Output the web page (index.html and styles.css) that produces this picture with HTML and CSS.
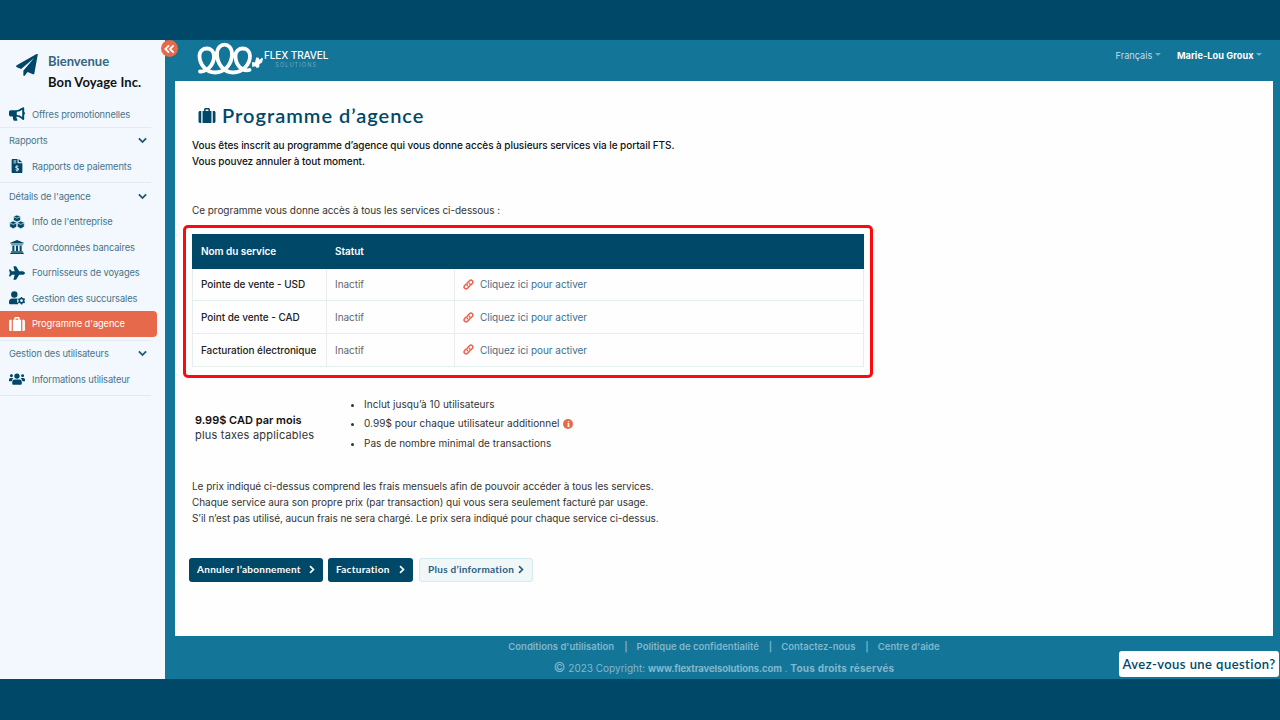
FILE: index.html
```
<!DOCTYPE html>
<html lang="fr">
<head>
<meta charset="UTF-8">
<meta name="viewport" content="width=device-width, initial-scale=1.0">
<title>Programme d’agence</title>
<link rel="stylesheet" href="styles.css">
</head>
<body>

<!-- Icons used in the page -->
<svg class="sprite" xmlns="http://www.w3.org/2000/svg">
  <symbol id="plane-paper" viewBox="0 0 24 24"><path d="M23.8.4 20 21.2c-.1.9-.8 1.1-1.5.8l-5.900-2.500-2.900 4c-.6.8-1.700.5-1.700-.6v-4.700L19.500 4.600 5.600 16.300.9 14.400c-1-.4-1-1.500-.1-2L22.400.1c.8-.4 1.500-.2 1.400.3z"/></symbol>
  <symbol id="horn" viewBox="0 0 24 20"><path fill-rule="evenodd" d="M21.500 0c.8 0 1.300.6 1.300 1.400V7c1.600.8 1.600 3.200 0 4v6.600c0 1.200-1.300 1.700-2.200 1l-3.300-2.600c-1.700-1.300-3.800-2.100-6-2.200-.2 1.900.2 3.300 1.200 4.600.5.700 0 1.600-.9 1.600H7.800c-.5 0-.9-.3-1.100-.7-.8-1.700-1.100-3.500-.8-5.500H2.500A2.500 2.500 0 0 1 0 11.300V6.700a2.500 2.500 0 0 1 2.500-2.500h8c2.500 0 4.900-.8 6.800-2.300L20.600.3c.3-.2.600-.3.900-.3zM19.800 3.600a12 12 0 0 1-8.100 2.900v5a12 12 0 0 1 8.100 2.900z"/></symbol>
  <symbol id="invoice" viewBox="0 0 20 26"><path fill-rule="evenodd" d="M2 0h9v6.500c0 .8.500 1.300 1.300 1.300H20V24c0 1.200-.8 2-2 2H2c-1.200 0-2-.8-2-2V2C0 .8.800 0 2 0zm1.500 3v1.500h5V3zm0 3.500V8h5V6.500zM9.300 11v1.400c-3.200.6-3.300 4.300-.3 5.200 2.500.8 2.400 1.200 2.300 1.600-.3.900-2 .7-3.400-.3l-1 1.700c.7.500 1.500.8 2.400 1V23h1.500v-1.400c3.500-.5 3.800-4.500.5-5.500-2.600-.8-2.600-1-2.400-1.500.3-.7 1.800-.6 3 .1l.9-1.600a5 5 0 0 0-2-.7V11zM13 0l7 6h-7z"/></symbol>
  <symbol id="cubes" viewBox="0 0 28 26"><g fill="currentColor" stroke="#f2f8fd" stroke-width="1.200"><path d="M14 0l6.500 2.800v7L14 13 7.500 9.800v-7zM7 11l6.500 3v8L7 25.500.5 22v-8zM21 11l6.500 3v8L21 25.500 14.500 22v-8z"/><path fill="none" d="M8 3.500l6 2.500 6-2.500M1 15L7 17.500l6-2.500M15 15l6 2.500 6-2.500"/></g></symbol>
  <symbol id="bank" viewBox="0 0 24 24"><path d="M12 0l11.500 4.500V6H.5V4.500zM2 7.500h20V9H2zM4 10h3.500v9H4zm6.200 0h3.600v9h-3.600zm6.300 0H20v9h-3.500zM2 19.300h20v2.200H2zM.5 22h23v2H.5z"/></symbol>
  <symbol id="plane" viewBox="0 0 28 24"><path d="M23.500 8.800c2 0 4.500 1.500 4.500 3.200s-2.500 3.200-4.500 3.200h-5.700l-5.200 8.300c-.2.300-.5.500-.8.500H8.600c-.6 0-1-.5-.8-1l2.200-7.800H5l-2.300 2.600c-.2.200-.4.300-.7.300H.8c-.5 0-.9-.5-.7-1L1.600 12 .1 6.900c-.2-.5.200-1 .7-1H2c.3 0 .5.100.7.300L5 8.800h5L7.800 1c-.2-.5.200-1 .8-1h3.200c.3 0 .6.200.8.500l5.200 8.300z"/></symbol>
  <symbol id="user-cog" viewBox="0 0 30 26"><circle cx="10" cy="6.500" r="6"/><path d="M6 14h8c.8 0 1.600.2 2.300.5-1.600 2.500-1.500 7 1.500 9.500-.4.300-.7.500-1.200.5H2.300A2.300 2.300 0 0 1 0 22.200v-2.200c0-3.500 2.500-6 6-6z"/><circle cx="23.500" cy="18" r="4" fill="none" stroke="currentColor" stroke-width="3"/><path fill="none" stroke="currentColor" stroke-width="2.600" d="M23.500 11v2.500M23.500 22.500V25M17.400 14.500l2.200 1.200M27.400 20.300l2.200 1.200M17.400 21.500l2.200-1.200M27.400 15.700l2.200-1.200"/></symbol>
  <symbol id="suitcase" viewBox="0 0 26 23"><path fill-rule="evenodd" d="M6.200 23V4.500h2.300V2.200C8.500 1 9.500 0 10.700 0h4.600c1.200 0 2.200 1 2.200 2.200v2.300h2.300V23zM10.800 4.500h4.400V2.300h-4.400zM4.200 4.500V23H2.200C1 23 0 22 0 20.800V6.700c0-1.200 1-2.200 2.200-2.200zM21.800 4.500h2c1.200 0 2.200 1 2.200 2.200v14.100c0 1.200-1 2.200-2.200 2.200h-2z"/></symbol>
  <symbol id="users" viewBox="0 0 30 22"><circle cx="15" cy="5.500" r="5"/><circle cx="4.500" cy="5" r="2.800"/><circle cx="25.500" cy="5" r="2.800"/><path d="M10.500 12h9a4.500 4.500 0 0 1 4.500 4.500V20a2 2 0 0 1-2 2H8a2 2 0 0 1-2-2v-3.500a4.500 4.500 0 0 1 4.500-4.500zM3 9h3c1 0 1.800.4 2.400 1.200A6 6 0 0 0 5 15H0v-3a3 3 0 0 1 3-3zM24 9h3a3 3 0 0 1 3 3v3h-5a6 6 0 0 0-3.400-4.800C22.200 9.400 23 9 24 9z"/></symbol>
  <symbol id="link" viewBox="0 0 24 24"><g fill="none" stroke="currentColor" stroke-width="3.200" stroke-linecap="round"><path d="M10 14.500c-2-2-2-4.600-.2-6.400l4.400-4.400c4-4 10.100 2 6.100 6.100l-2.600 2.600"/><path d="M14 9.500c2 2 2 4.600.2 6.400l-4.400 4.400c-4 4-10.100-2-6.100-6.100l2.600-2.600"/></g></symbol>
  <symbol id="down" viewBox="0 0 10 7"><path fill="none" stroke="currentColor" stroke-width="2" d="M1 1.200l4 4 4-4"/></symbol>
  <symbol id="right" viewBox="0 0 7 10"><path fill="none" stroke="currentColor" stroke-width="2" d="M1.200 1l4 4-4 4"/></symbol>
</svg>

<div class="app">
  <aside class="sidebar">
    <div class="welcome">
      <svg class="welcome-icon"><use href="#plane-paper"/></svg>
      <div>
        <div class="hello">Bienvenue</div>
        <div class="agency">Bon Voyage Inc.</div>
      </div>
    </div>
    <nav>
      <div class="group group-promo">
        <a class="item"><svg><use href="#horn"/></svg>Offres promotionnelles</a>
      </div>
      <div class="group">
        <div class="group-title">Rapports <svg><use href="#down"/></svg></div>
        <a class="item"><svg><use href="#invoice"/></svg>Rapports de paiements</a>
      </div>
      <div class="group">
        <div class="group-title">Détails de l'agence <svg><use href="#down"/></svg></div>
        <a class="item"><svg><use href="#cubes"/></svg>Info de l'entreprise</a>
        <a class="item"><svg><use href="#bank"/></svg>Coordonnées bancaires</a>
        <a class="item"><svg><use href="#plane"/></svg>Fournisseurs de voyages</a>
        <a class="item"><svg><use href="#user-cog"/></svg>Gestion des succursales</a>
        <a class="item active"><svg><use href="#suitcase"/></svg>Programme d'agence</a>
      </div>
      <div class="group">
        <div class="group-title">Gestion des utilisateurs <svg><use href="#down"/></svg></div>
        <a class="item"><svg><use href="#users"/></svg>Informations utilisateur</a>
      </div>
    </nav>
    <button class="collapse" aria-label="Réduire">
      <svg viewBox="0 0 12 10"><path d="M5.500 1l-4 4 4 4M10.500 1l-4 4 4 4"/></svg>
    </button>
  </aside>

  <div class="main">
    <header class="topbar">
      <div class="logo">
        <svg class="logo-mark" viewBox="0 0 66 34">
          <path class="loop" d="M3 29.500C10 30 17 23 17 14C17 4 2.500 4 2.500 14C2.500 22 9 30.500 18 30.500C28 30.500 35 22 35 12C35-.5 20-.5 20 12C20 22 27 30.500 36 30.500C46 30.500 53 22 53 14C53 4 38.500 4 38.500 14C38.500 22 44 30 52.500 28"/>
          <path class="craft" d="M55 20l3 .5 1.200-5 2.400.2.800 2 2.800-2 .8 1.200-1 3.600-2.600 1.800-.2 2.900-2.400.8-1.500-1.700-3 .7z"/>
        </svg>
        <div class="logo-text">
          <div class="logo-name">FLEX TRAVEL</div>
          <div class="logo-sub">SOLUTIONS</div>
        </div>
      </div>
      <div class="top-links">
        <a class="lang">Français <i class="caret"></i></a>
        <a class="user">Marie-Lou Groux <i class="caret"></i></a>
      </div>
    </header>

    <main class="content">
      <h1><svg><use href="#suitcase"/></svg>Programme d’agence</h1>
      <p class="intro">Vous êtes inscrit au programme d’agence qui vous donne accès à plusieurs services via le portail FTS.<br>Vous pouvez annuler à tout moment.</p>
      <p class="lead">Ce programme vous donne accès à tous les services ci-dessous :</p>

      <div class="highlight">
        <table>
          <thead>
            <tr><th class="col-name">Nom du service</th><th class="col-status">Statut</th><th></th></tr>
          </thead>
          <tbody>
            <tr><td class="service">Pointe de vente - USD</td><td>Inactif</td><td><a class="activate"><svg><use href="#link"/></svg>Cliquez ici pour activer</a></td></tr>
            <tr><td class="service">Point de vente - CAD</td><td>Inactif</td><td><a class="activate"><svg><use href="#link"/></svg>Cliquez ici pour activer</a></td></tr>
            <tr><td class="service">Facturation électronique</td><td>Inactif</td><td><a class="activate"><svg><use href="#link"/></svg>Cliquez ici pour activer</a></td></tr>
          </tbody>
        </table>
      </div>

      <div class="pricing">
        <div class="price"><strong>9.99$ CAD par mois</strong><br>plus taxes applicables</div>
        <ul>
          <li>Inclut jusqu’à 10 utilisateurs</li>
          <li>0.99$ pour chaque utilisateur additionnel <span class="info">i</span></li>
          <li>Pas de nombre minimal de transactions</li>
        </ul>
      </div>

      <p class="note">Le prix indiqué ci-dessus comprend les frais mensuels afin de pouvoir accéder à tous les services.<br>Chaque service aura son propre prix (par transaction) qui vous sera seulement facturé par usage.<br>S’il n’est pas utilisé, aucun frais ne sera chargé. Le prix sera indiqué pour chaque service ci-dessus.</p>

      <div class="actions">
        <button class="btn btn-cancel">Annuler l’abonnement <svg><use href="#right"/></svg></button>
        <button class="btn btn-billing">Facturation <svg><use href="#right"/></svg></button>
        <button class="btn btn-light">Plus d’information <svg><use href="#right"/></svg></button>
      </div>
    </main>

    <footer>
      <div class="footer-links"><a>Conditions d'utilisation</a><a>Politique de confidentialité</a><a>Contactez-nous</a><a>Centre d'aide</a></div>
      <div class="copyright"><span class="copy">©</span> 2023 Copyright: <b class="site">www.flextravelsolutions.com</b> . <b class="rights">Tous droits réservés</b></div>
    </footer>
  </div>

  <div class="question">Avez-vous une question?</div>
</div>

</body>
</html>
```
FILE: styles.css
```
* {
  box-sizing: border-box;
}

body {
  margin: 0;
  padding: 40px 0 41px;
  height: 720px;
  overflow: hidden;
  background-color: #004868;
  font-family: Inter, "Open Sans", sans-serif;
  font-size: 10px;
  color: #333;
}

svg {
  fill: currentColor;
  flex: none;
}

.sprite {
  display: none;
}

.app {
  position: relative;
  display: flex;
  height: 639px;
  background-color: #137598;
}

/* Sidebar */
.sidebar {
  position: relative;
  width: 165px;
  flex: none;
  background-color: #f2f8fd;
  color: #48738a;
}

.welcome {
  display: flex;
  height: 61px;
  padding: 11px 0 0 16px;
  gap: 10px;
  font-family: Lato, sans-serif;
  font-size: 13px;
  font-weight: 700;
  line-height: 21px;
}

.welcome-icon {
  width: 22px;
  height: 22px;
  margin-top: 3px;
  color: #004868;
}

.hello {
  color: #356683;
}

.agency {
  color: #111;
  letter-spacing: 0.1px;
  white-space: nowrap;
}

.group {
  width: 151px;
  padding-bottom: 3px;
  border-bottom: 1px solid #e4eaed;
}

.group-promo {
  padding: 0.5px 0 0;
}

.group-title {
  display: flex;
  justify-content: space-between;
  align-items: center;
  height: 26px;
  padding: 0 4px 0 9px;
  font-size: 9.3px;
  letter-spacing: -0.12px;
}

.group-title svg {
  width: 9px;
  height: 7px;
  color: #175672;
}

.item {
  display: flex;
  align-items: center;
  gap: 7px;
  width: 157px;
  height: 25.5px;
  padding-left: 9px;
  font-size: 9.3px;
  letter-spacing: -0.1px;
  white-space: nowrap;
}

.group-promo .item {
  height: 25px;
}

.item svg {
  width: 16px;
  height: 14px;
  color: #004868;
}

.item.active {
  background-color: #e7694b;
  color: #fff;
  border-radius: 0 4px 4px 0;
}

.item.active svg {
  color: #fff;
}

.collapse {
  position: absolute;
  top: 0;
  right: -13px;
  display: flex;
  align-items: center;
  justify-content: center;
  width: 17px;
  height: 17px;
  padding: 0;
  border: none;
  border-radius: 50%;
  background-color: #e7694b;
}

.collapse svg {
  width: 11px;
  height: 10px;
  fill: none;
  stroke: #fff;
  stroke-width: 2;
}

/* Main column */
.main {
  display: flex;
  flex-direction: column;
  flex: 1;
  padding: 0 7px 0 10px;
}

.topbar {
  display: flex;
  justify-content: space-between;
  flex: none;
  height: 41px;
  padding: 0 11px 0 22px;
  color: #fff;
}

.logo {
  display: flex;
}

.logo-mark {
  width: 66px;
  height: 34px;
  margin-top: 2px;
}

.loop {
  fill: none;
  stroke: #fff;
  stroke-width: 3.8;
  stroke-linecap: round;
}

.logo-text {
  padding: 9px 0 0 1px;
}

.logo-name {
  font-size: 10px;
  font-weight: 500;
  letter-spacing: -0.1px;
  line-height: 12px;
}

.logo-sub {
  font-size: 5.5px;
  letter-spacing: 1.1px;
  line-height: 8px;
  text-align: center;
  color: #6fabc1;
}

.top-links {
  display: flex;
  gap: 16px;
  padding-top: 9px;
  font-size: 9.2px;
  line-height: 13px;
}

.lang {
  color: #c4dfe9;
}

.user {
  font-weight: 700;
  letter-spacing: 0.07px;
}

.caret {
  display: inline-block;
  vertical-align: 3px;
  border: 3px solid transparent;
  border-top-color: #75b2c8;
  border-bottom: none;
}

.content {
  flex: none;
  height: 555px;
  padding: 21px 17px 0;
  background-color: #fefefe;
}

h1 {
  display: flex;
  align-items: center;
  gap: 6px;
  height: 26px;
  margin: 0 0 10px 6px;
  font-family: Lato, sans-serif;
  font-size: 20px;
  font-weight: 600;
  letter-spacing: 1px;
  color: #004868;
}

h1 svg {
  width: 18px;
  height: 15px;
}

p {
  margin: 0;
  line-height: 16px;
  letter-spacing: -0.05px;
}

.intro {
  margin-top: -1px;
  font-weight: 500;
  letter-spacing: -0.06px;
  color: #111;
}

.lead {
  margin-top: 33px;
}

.highlight {
  width: 690px;
  height: 153px;
  margin: 7px 0 0 -9px;
  padding: 6px;
  border: 3px solid #fe0a0c;
  border-radius: 5px;
}

table {
  width: 672px;
  border-collapse: collapse;
  table-layout: fixed;
}

th {
  height: 33.5px;
  padding: 0 8px 1px;
  border: 1px solid #004868;
  background-color: #004868;
  color: #fff;
  font-weight: 600;
  letter-spacing: -0.05px;
  text-align: left;
}

.col-name {
  width: 134px;
}

.col-status {
  width: 128px;
}

td {
  height: 32.7px;
  padding: 0 8px;
  border: 1px solid #e7eef0;
  color: #666;
  letter-spacing: -0.05px;
  white-space: nowrap;
}

.service {
  font-weight: 500;
  color: #222;
}

.activate {
  display: flex;
  align-items: center;
  gap: 6px;
  color: #41708b;
}

.activate svg {
  width: 11px;
  height: 11px;
  color: #f0604d;
}

.pricing {
  display: flex;
  align-items: center;
  margin-top: 17px;
  height: 58px;
}

.price {
  width: 155px;
  padding: 7px 0 0 3px;
  font-size: 11px;
  letter-spacing: 0.2px;
  line-height: 15px;
}

.price strong {
  font-weight: 600;
  letter-spacing: 0;
  color: #111;
}

ul {
  margin: 0;
  padding-left: 17px;
  line-height: 19.4px;
  letter-spacing: 0.04px;
}

.info {
  display: inline-block;
  width: 10px;
  height: 10px;
  margin-left: 1px;
  border-radius: 50%;
  background-color: #e7694b;
  color: #fff;
  font-family: "Liberation Serif", serif;
  font-size: 9px;
  font-weight: 700;
  line-height: 10px;
  text-align: center;
}

.note {
  margin-top: 25px;
}

.actions {
  display: flex;
  gap: 5px;
  margin: 32px 0 0 -3px;
}

.btn {
  display: flex;
  align-items: center;
  justify-content: space-between;
  height: 24px;
  padding: 0 8px 2px;
  border: none;
  border-radius: 3px;
  background-color: #004868;
  color: #fff;
  font-family: Lato, sans-serif;
  font-size: 10px;
  font-weight: 700;
  letter-spacing: 0.28px;
  white-space: nowrap;
}

.btn svg {
  width: 6px;
  height: 9px;
}

.btn-cancel {
  width: 134px;
}

.btn-billing {
  width: 85px;
}

.btn-light {
  width: 114px;
  margin-left: 1px;
  border: 1px solid #d5e9f1;
  background-color: #f0f7f9;
  color: #2b607d;
}

/* Footer */
footer {
  padding-top: 3px;
  color: #80b8cc;
  text-align: center;
}

.footer-links {
  display: flex;
  justify-content: center;
  line-height: 15px;
  font-size: 9.5px;
  font-weight: 600;
}

.footer-links a + a::before {
  content: "|";
  margin: 0 9px 0 10px;
}

.copyright {
  line-height: 26px;
}

.copy {
  font-size: 13px;
}

.site {
  font-size: 9.5px;
  letter-spacing: -0.1px;
}

.rights {
  letter-spacing: 0.22px;
}

.question {
  position: absolute;
  right: 1px;
  bottom: 2px;
  width: 160px;
  height: 26px;
  border-radius: 3px;
  background-color: #fff;
  color: #004868;
  font-family: Lato, sans-serif;
  font-size: 13px;
  font-weight: 600;
  letter-spacing: 0.44px;
  line-height: 26px;
  text-align: center;
}
```
